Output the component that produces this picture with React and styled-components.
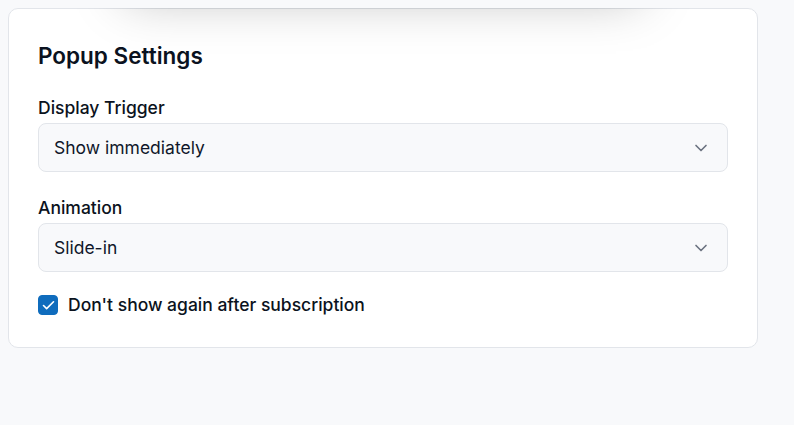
import React, { useState } from 'react';
import styled, { createGlobalStyle } from 'styled-components';

const GlobalStyle = createGlobalStyle`
  body {
    margin: 8px;
    background: #f8f9fb;
    font-family: Inter, "Noto Sans", sans-serif;
    color: #0f172a;
    overflow: hidden;
  }
`;

const Column = styled.div`
  width: 750px;
  display: flex;
  flex-direction: column;
  gap: 24px;
`;

// preview popup scrolled above the viewport, only its shadow shows
const Preview = styled.div`
  position: relative;
  z-index: 1;
  align-self: center;
  width: 540px;
  height: 300px;
  margin-top: -324px;
  background: #ffffff;
  border-radius: 12px;
  box-shadow: 0 25px 50px -12px rgba(0, 0, 0, 0.28);
`;

const Card = styled.section`
  background: #ffffff;
  border: 1px solid #e2e5ea;
  border-radius: 10px;
  padding: 32px 29px 29px;
`;

const Title = styled.h2`
  margin: 0 0 24px;
  font-size: 22.5px;
  line-height: 30px;
  font-weight: 600;
  color: #0b1220;
`;

const Field = styled.div`
  display: flex;
  flex-direction: column;
  gap: 2px;
  margin-bottom: ${(p) => p.$mb || 23}px;
`;

const Label = styled.label`
  font-size: 17.5px;
  line-height: 26px;
  font-weight: 500;
  color: #0b1220;
`;

const SelectBox = styled.button`
  display: flex;
  align-items: center;
  justify-content: space-between;
  height: 49px;
  padding: 0 16px 0 15px;
  background: #f8f9fb;
  border: 1px solid #e2e5ea;
  border-radius: 8px;
  font-family: inherit;
  font-size: 17.5px;
  color: #0f172a;
  text-align: left;
  cursor: pointer;
`;

const CheckRow = styled.label`
  display: flex;
  align-items: center;
  gap: 10px;
  font-size: 17.5px;
  line-height: 26px;
  font-weight: 500;
  color: #0b1220;
  cursor: pointer;
`;

const Box = styled.span`
  width: 20px;
  height: 20px;
  border-radius: 4px;
  background: ${(p) => (p.$on ? '#0f6cbd' : '#ffffff')};
  border: 1px solid ${(p) => (p.$on ? '#0f6cbd' : '#cbd2da')};
  box-sizing: border-box;
  display: flex;
  align-items: center;
  justify-content: center;
`;

const Chevron = () => (
  <svg width="20" height="20" viewBox="0 0 24 24" fill="none" stroke="#6b7280" strokeWidth="2" strokeLinecap="round" strokeLinejoin="round">
    <path d="m6 9 6 6 6-6" />
  </svg>
);

const Select = ({ value }) => (
  <SelectBox type="button">
    <span>{value}</span>
    <Chevron />
  </SelectBox>
);

export default function App() {
  const [hide, setHide] = useState(true);

  return (
    <>
      <GlobalStyle />
      <Column>
        <Preview />
        <Card>
          <Title>Popup Settings</Title>
          <Field>
            <Label>Display Trigger</Label>
            <Select value="Show immediately" />
          </Field>
          <Field $mb={20}>
            <Label>Animation</Label>
            <Select value="Slide-in" />
          </Field>
          <CheckRow onClick={() => setHide(!hide)}>
            <Box $on={hide}>
              {hide && (
                <svg width="15" height="15" viewBox="0 0 24 24" fill="none" stroke="#fff" strokeWidth="2.6" strokeLinecap="round" strokeLinejoin="round">
                  <path d="M20 6 9 17l-5-5" />
                </svg>
              )}
            </Box>
            Don't show again after subscription
          </CheckRow>
        </Card>
      </Column>
    </>
  );
}
